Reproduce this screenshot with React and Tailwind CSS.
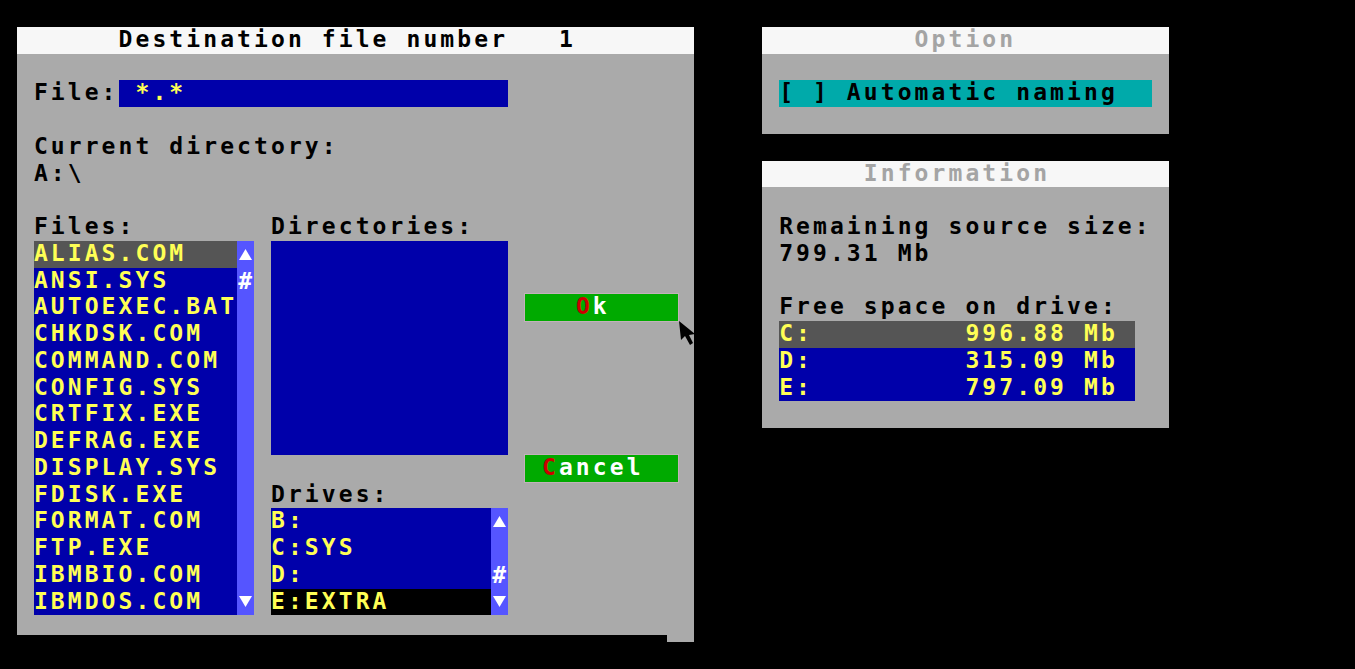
import React from "react";

const files = [
  "ALIAS.COM",
  "ANSI.SYS",
  "AUTOEXEC.BAT",
  "CHKDSK.COM",
  "COMMAND.COM",
  "CONFIG.SYS",
  "CRTFIX.EXE",
  "DEFRAG.EXE",
  "DISPLAY.SYS",
  "FDISK.EXE",
  "FORMAT.COM",
  "FTP.EXE",
  "IBMBIO.COM",
  "IBMDOS.COM",
];

const drives = ["B:", "C:SYS", "D:", "E:EXTRA"];

const Up = () => (
  <svg width="13" height="11" viewBox="0 0 13 11" className="mx-auto">
    <polygon points="6.5,0 13,11 0,11" fill="#ffffff" />
  </svg>
);

const Down = () => (
  <svg width="13" height="11" viewBox="0 0 13 11" className="mx-auto">
    <polygon points="0,0 13,0 6.5,11" fill="#ffffff" />
  </svg>
);

const Row = ({ className = "", children }) => (
  <div className={"h-[26.76px] whitespace-pre leading-[24px] " + className}>{children}</div>
);

const Scrollbar = ({ marks }) => (
  <div className="w-[16.9375px] bg-[#5555ff] flex flex-col">
    {marks.map((m, i) => (
      <div key={i} className="h-[26.76px] flex items-center justify-center text-white">
        {m === "up" ? <Up /> : m === "down" ? <Down /> : m === "#" ? <span className="leading-[24px] pl-[2px]">#</span> : null}
      </div>
    ))}
  </div>
);

const Cursor = () => (
  <svg
    width="18"
    height="26"
    viewBox="0 0 18 26"
    className="absolute left-[679px] top-[321px]"
  >
    <polygon points="0,0 2,19 6,15 11,24 14,22 10,14 16,13" fill="#000000" />
  </svg>
);

export default function App() {
  const fileMarks = files.map((_, i) =>
    i === 0 ? "up" : i === 1 ? "#" : i === files.length - 1 ? "down" : ""
  );
  const driveMarks = ["up", "", "#", "down"];

  return (
    <div className="relative w-[1355px] h-[669px] bg-black overflow-hidden font-['DejaVu_Sans_Mono',monospace] font-bold text-[23px] tracking-[3.09px] text-black">
      <div className="grid grid-cols-[repeat(80,16.9375px)] grid-rows-[repeat(25,26.76px)]">
        {/* Destination dialog */}
        <div className="col-start-2 col-span-40 row-start-2 row-span-23 bg-[#aaaaaa] grid grid-cols-[repeat(40,16.9375px)] grid-rows-[repeat(23,26.76px)]">
          <Row className="col-start-1 col-span-40 row-start-1 bg-[#f7f7f7]">
            {"      Destination file number   1"}
          </Row>

          <Row className="col-start-2 col-span-5 row-start-3">File:</Row>
          <Row className="col-start-7 col-span-23 row-start-3 bg-[#0000aa] text-[#ffff55]">{" *.*"}</Row>

          <Row className="col-start-2 col-span-30 row-start-5">Current directory:</Row>
          <Row className="col-start-2 col-span-10 row-start-6">{"A:\\"}</Row>

          <Row className="col-start-2 col-span-10 row-start-8">Files:</Row>
          <Row className="col-start-16 col-span-14 row-start-8">Directories:</Row>

          <div className="col-start-2 col-span-13 row-start-9 row-span-14 flex">
            <div className="flex-1 bg-[#0000aa] text-[#ffff55]">
              {files.map((f, i) => (
                <Row key={f} className={i === 0 ? "bg-[#555555]" : ""}>
                  {f}
                </Row>
              ))}
            </div>
            <Scrollbar marks={fileMarks} />
          </div>

          <div className="col-start-16 col-span-14 row-start-9 row-span-8 bg-[#0000aa]" />

          <Row className="col-start-31 col-span-9 row-start-11 bg-[#00aa00] text-white shadow-[0_0_0_1px_#c2b2ba]">
            {"   "}
            <span className="text-[#cc0000]">O</span>k
          </Row>

          <Row className="col-start-31 col-span-9 row-start-17 bg-[#00aa00] text-white shadow-[0_0_0_1px_#c2b2ba]">
            {" "}
            <span className="text-[#cc0000]">C</span>ancel
          </Row>

          <Row className="col-start-16 col-span-10 row-start-18">Drives:</Row>
          <div className="col-start-16 col-span-14 row-start-19 row-span-4 flex">
            <div className="flex-1 bg-[#0000aa] text-[#ffff55]">
              {drives.map((d, i) => (
                <Row key={d} className={i === 3 ? "bg-black" : ""}>
                  {d}
                </Row>
              ))}
            </div>
            <Scrollbar marks={driveMarks} />
          </div>
        </div>

        {/* Option panel */}
        <div className="col-start-46 col-span-24 row-start-2 row-span-4 bg-[#aaaaaa] grid grid-cols-[repeat(24,16.9375px)] grid-rows-[repeat(4,26.76px)]">
          <Row className="col-start-1 col-span-24 row-start-1 bg-[#f7f7f7] text-[#a4a4a4]">
            {"         Option"}
          </Row>
          <Row className="col-start-2 col-span-22 row-start-3 bg-[#00aaaa]">[ ] Automatic naming</Row>
        </div>

        {/* Information panel */}
        <div className="col-start-46 col-span-24 row-start-7 row-span-10 bg-[#aaaaaa] grid grid-cols-[repeat(24,16.9375px)] grid-rows-[repeat(10,26.76px)]">
          <Row className="col-start-1 col-span-24 row-start-1 bg-[#f7f7f7] text-[#a4a4a4]">
            {"      Information"}
          </Row>
          <Row className="col-start-2 col-span-23 row-start-3">Remaining source size:</Row>
          <Row className="col-start-2 col-span-23 row-start-4">799.31 Mb</Row>
          <Row className="col-start-2 col-span-23 row-start-6">Free space on drive:</Row>
          <div className="col-start-2 col-span-21 row-start-7 row-span-3 bg-[#0000aa] text-[#ffff55]">
            <Row className="bg-[#555555]">{"C:         996.88 Mb"}</Row>
            <Row>{"D:         315.09 Mb"}</Row>
            <Row>{"E:         797.09 Mb"}</Row>
          </div>
        </div>
      </div>

      <div className="absolute left-[17px] top-[635px] w-[650px] h-[8px] bg-black" />
      <Cursor />
    </div>
  );
}
